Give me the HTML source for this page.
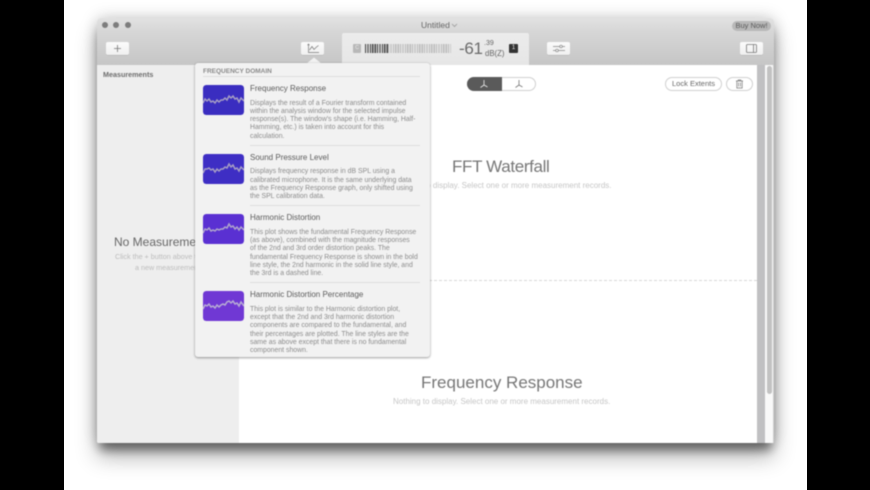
<!DOCTYPE html>
<html><head><meta charset="utf-8"><style>
html,body{margin:0;padding:0;background:#000;width:870px;height:490px;overflow:hidden}
*{box-sizing:border-box}
body{font-family:"Liberation Sans",sans-serif;position:relative}
#pg{position:absolute;left:0;top:0;width:870px;height:490px;filter:blur(.5px)}
#white{position:absolute;left:64px;top:0;width:743px;height:490px;background:#fff;overflow:hidden}
#win{position:absolute;left:97px;top:18px;width:677px;height:425px;border-radius:4px 4px 2px 2px;background:#fff;box-shadow:0 10px 10px -3px rgba(0,0,0,.42),0 14px 22px rgba(0,0,0,.3),0 0 16px rgba(0,0,0,.22)}
.a{position:absolute;white-space:nowrap}
.btn{position:absolute;top:42px;height:13px;width:23px;background:linear-gradient(#fbfbfb,#f0f0f0);border-radius:2px;box-shadow:0 .5px 0 #aaa}
.b{font-size:6.9px;line-height:8px;color:#8c8c8c;left:250px;margin-top:.7px}
.t{font-size:8px;line-height:10px;color:#5c5c5c;left:250px;margin-top:.6px}
.sep{position:absolute;left:250px;width:170px;height:1px;background:#dedede}
.th{position:absolute;left:203px;width:41px;height:30px;border-radius:3px}
</style></head><body>
<div id="white"></div>
<div id="pg">
<div id="win"></div>
<div class="a" style="left:97px;top:18px;width:677px;height:47px;border-radius:4px 4px 0 0;background:linear-gradient(#e2e2e2,#d6d6d6 30%,#c6c6c6)"></div>
<div class="a" style="left:97px;top:65px;width:142px;height:378px;background:#eeeeee;border-radius:0 0 0 2px"></div>
<div class="a" style="left:757px;top:65px;width:8px;height:378px;background:#c0c0c2"></div>
<div class="a" style="left:765px;top:65px;width:9px;height:378px;background:#f9f9f9;border-right:1px solid #cfcfcf"></div>
<div class="a" style="left:767px;top:66px;width:5px;height:328px;background:#c2c2c2;border-radius:3px"></div>

<div class="a" style="left:102px;top:22px;width:6px;height:6px;border-radius:50%;background:#7d7d7d"></div>
<div class="a" style="left:113px;top:22px;width:6px;height:6px;border-radius:50%;background:#7d7d7d"></div>
<div class="a" style="left:125px;top:22px;width:6px;height:6px;border-radius:50%;background:#7d7d7d"></div>
<div class="a" style="left:421px;top:20px;font-size:8.5px;line-height:11px;color:#666">Untitled</div>
<svg class="a" style="left:451px;top:23px" width="7" height="5"><path d="M1 1l2.5 2.5L6 1" fill="none" stroke="#999" stroke-width=".8"/></svg>
<div class="a" style="left:732px;top:21px;width:39px;height:10px;border-radius:5px;background:#b8b8b8;font-size:7.5px;line-height:10px;text-align:center;color:#5a5a5a">Buy Now!</div>

<div class="btn" style="left:106px"></div>
<svg class="a" style="left:112px;top:43px" width="11" height="11"><path d="M5.5 2v7M2 5.5h7" stroke="#777" stroke-width=".8"/></svg>
<div class="btn" style="left:301px"></div>
<svg class="a" style="left:306px;top:43px" width="14" height="11"><path d="M2.5 1v8.5H13M1.5 2.2l1-1.2 1 1.2" fill="none" stroke="#777" stroke-width=".7"/><path d="M3.5 7L6 3.5 8 6.5 10.5 4 12.5 2.5" fill="none" stroke="#777" stroke-width=".7"/></svg>
<div class="btn" style="left:547px"></div>
<svg class="a" style="left:552px;top:43px" width="14" height="11"><path d="M1 3.5h12M1 7.5h12" stroke="#888" stroke-width=".7"/><circle cx="9" cy="3.5" r="1.3" fill="#f6f6f6" stroke="#888" stroke-width=".7"/><circle cx="5" cy="7.5" r="1.3" fill="#f6f6f6" stroke="#888" stroke-width=".7"/></svg>
<div class="btn" style="left:740px"></div>
<svg class="a" style="left:745px;top:43px" width="13" height="11"><rect x="1.5" y="1.5" width="10" height="8" rx="1" fill="none" stroke="#777" stroke-width=".8"/><path d="M8.5 1.5v8" stroke="#777" stroke-width=".8"/></svg>

<div class="a" style="left:342px;top:33px;width:187px;height:32px;background:linear-gradient(#ececec,#e6e6e6);border-radius:2px 2px 0 0"></div>
<div class="a" style="left:353px;top:44px;width:8px;height:8.5px;background:#b8b8b8;border-radius:1px;color:#eee;font-size:5px;line-height:8px;text-align:center">C</div>
<div class="a" style="left:365px;top:44px;width:23px;height:9px;background:repeating-linear-gradient(90deg,#4a4a4a 0 1.2px,#d8d8d8 1.2px 2.4px)"></div>
<div class="a" style="left:388px;top:44px;width:63px;height:9px;background:repeating-linear-gradient(90deg,#bcbcbc 0 1.2px,#e4e4e4 1.2px 2.4px)"></div>
<div class="a" style="left:459px;top:38px;font-size:17px;line-height:22px;color:#6a6a6a;letter-spacing:-.3px">-61</div>
<div class="a" style="left:484px;top:40px;font-size:7px;line-height:8px;color:#666">.39</div>
<div class="a" style="left:485px;top:49px;font-size:7.8px;line-height:9px;color:#666">dB(Z)</div>
<div class="a" style="left:509px;top:44px;width:9px;height:9px;background:#333;border-radius:1px;color:#eee;font-size:6px;line-height:9px;text-align:center">1</div>

<div class="a" style="left:103px;top:70px;font-size:7.2px;line-height:9px;font-weight:bold;color:#6e6e6e">Measurements</div>
<div class="a" style="left:114px;top:234px;font-size:12px;line-height:16px;color:#666">No Measurements</div>
<div class="a" style="left:115px;top:252px;font-size:7.2px;line-height:10px;color:#bcbcbc">Click the + button above to add</div>
<div class="a" style="left:135px;top:263px;font-size:7.2px;line-height:10px;color:#bcbcbc">a new measurement.</div>

<div class="a" style="left:467px;top:77px;width:69px;height:14px;border-radius:7px;border:1px solid #d0d0d0;background:#fff"></div>
<div class="a" style="left:467px;top:77px;width:35px;height:14px;border-radius:7px 0 0 7px;background:#5a5a5a"></div>
<svg class="a" style="left:478px;top:78px" width="12" height="12"><path d="M6 2v5L2.5 9.5M6 7l3.5 2" fill="none" stroke="#eee" stroke-width=".8"/></svg>
<svg class="a" style="left:513px;top:78px" width="12" height="12"><path d="M6 2v5L2.5 9.5M6 7l3.5 2" fill="none" stroke="#777" stroke-width=".8"/></svg>
<div class="a" style="left:665px;top:77px;width:57px;height:14px;border-radius:7px;border:1px solid #d0d0d0;background:#fff;font-size:7.5px;line-height:12px;text-align:center;color:#666">Lock Extents</div>
<div class="a" style="left:726px;top:77px;width:27px;height:14px;border-radius:7px;border:1px solid #d0d0d0;background:#fff"></div>
<svg class="a" style="left:735px;top:79px" width="9" height="10"><path d="M1 2h7M3.2 2V1h2.6v1M1.8 2v7h5.4V2M3.5 3.5v4M5.5 3.5v4" fill="none" stroke="#777" stroke-width=".7"/></svg>

<div class="a" style="left:452px;top:156.7px;font-size:17px;line-height:20px;color:#777;letter-spacing:-.35px">FFT Waterfall</div>
<div class="a" style="left:424px;top:180.7px;font-size:8px;line-height:10px;color:#c6c6c6">to display. Select one or more measurement records.</div>
<div class="a" style="left:239px;top:280px;width:518px;height:0;border-top:1px dashed #d8d8d8"></div>
<div class="a" style="left:421px;top:372.7px;font-size:17px;line-height:20px;color:#777">Frequency Response</div>
<div class="a" style="left:393px;top:396.7px;font-size:8px;line-height:10px;color:#c6c6c6">Nothing to display. Select one or more measurement records.</div>

<svg class="a" style="left:305px;top:57px" width="18" height="7"><path d="M1 7L9 .5 17 7z" fill="#f2f2f2"/></svg>
<div class="a" style="left:195px;top:63px;width:235px;height:294px;background:#f2f2f2;border-radius:3px;box-shadow:0 1px 2px rgba(0,0,0,.35),0 0 2px rgba(0,0,0,.12)"></div>
<div class="a" style="left:203px;top:66.5px;font-size:6.5px;line-height:9px;font-weight:bold;color:#8a8a8a">FREQUENCY DOMAIN</div>
<div class="a" style="left:203px;top:76px;width:217px;height:1px;background:#dedede"></div>

<svg class="th" style="top:85px" viewBox="0 0 41 30"><rect width="41" height="30" rx="3" fill="#3a2dc0"/><polyline fill="none" stroke="#a79fc4" stroke-width="1.5" points="0,18 2,14 4,16 6,14 8,17 10,16 12,18 14,15 16,17 18,15 20,15 22,13 24,15 26,11 28,13 30,11 32,14 34,13 36,17 38,13 41,16"/></svg>
<div class="a t" style="top:83px">Frequency Response</div>
<div class="a b" style="top:99px">Displays the result of a Fourier transform contained</div>
<div class="a b" style="top:107px">within the analysis window for the selected impulse</div>
<div class="a b" style="top:115.5px">response(s). The window's shape (i.e. Hamming, Half-</div>
<div class="a b" style="top:123.7px">Hamming, etc.) is taken into account for this</div>
<div class="a b" style="top:132px">calculation.</div>
<div class="sep" style="top:145px"></div>

<svg class="th" style="top:154px" viewBox="0 0 41 30"><rect width="41" height="30" rx="3" fill="#3e2ec4"/><polyline fill="none" stroke="#a79fc4" stroke-width="1.5" points="0,19 2,15 4,15 6,14 8,16 10,15 12,18 14,15 16,17 18,15 20,15 22,13 24,14 26,10 28,13 30,11 32,15 34,14 36,17 38,13 41,16"/></svg>
<div class="a t" style="top:152px">Sound Pressure Level</div>
<div class="a b" style="top:167.7px">Displays frequency response in dB SPL using a</div>
<div class="a b" style="top:176px">calibrated microphone. It is the same underlying data</div>
<div class="a b" style="top:184px">as the Frequency Response graph, only shifted using</div>
<div class="a b" style="top:192.7px">the SPL calibration data.</div>
<div class="sep" style="top:205px"></div>

<svg class="th" style="top:214px" viewBox="0 0 41 30"><rect width="41" height="30" rx="3" fill="#5a30d2"/><polyline fill="none" stroke="#b0a6cc" stroke-width="1.5" points="0,19 2,15 4,16 6,14 8,17 10,16 12,17 14,15 16,16 18,15 20,15 22,13 24,14 26,10 28,13 30,12 32,15 34,13 36,16 38,13 41,16"/></svg>
<div class="a t" style="top:212.5px">Harmonic Distortion</div>
<div class="a b" style="top:228.3px">This plot shows the fundamental Frequency Response</div>
<div class="a b" style="top:236.5px">(as above), combined with the magnitude responses</div>
<div class="a b" style="top:244.5px">of the 2nd and 3rd order distortion peaks. The</div>
<div class="a b" style="top:253px">fundamental Frequency Response is shown in the bold</div>
<div class="a b" style="top:261px">line style, the 2nd harmonic in the solid line style, and</div>
<div class="a b" style="top:269.3px">the 3rd is a dashed line.</div>
<div class="sep" style="top:282px"></div>

<svg class="th" style="top:291px" viewBox="0 0 41 30"><rect width="41" height="30" rx="3" fill="#7038d4"/><polyline fill="none" stroke="#b8aed4" stroke-width="1.5" points="0,18 2,14 4,15 6,13 8,16 10,15 12,17 14,14 16,16 18,14 20,13 22,14 24,11 26,10 28,12 30,10 32,13 34,12 36,15 38,11 41,15"/></svg>
<div class="a t" style="top:289.7px">Harmonic Distortion Percentage</div>
<div class="a b" style="top:305.3px">This plot is similar to the Harmonic distortion plot,</div>
<div class="a b" style="top:313.5px">except that the 2nd and 3rd harmonic distortion</div>
<div class="a b" style="top:321.7px">components are compared to the fundamental, and</div>
<div class="a b" style="top:330px">their percentages are plotted. The line styles are the</div>
<div class="a b" style="top:338px">same as above except that there is no fundamental</div>
<div class="a b" style="top:346.7px">component shown.</div>
</div></body></html>
